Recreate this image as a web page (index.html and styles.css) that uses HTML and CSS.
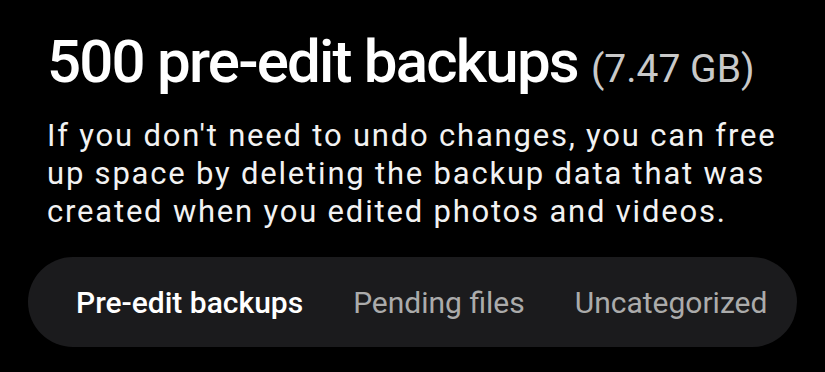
FILE: index.html
```html
<!DOCTYPE html>
<html>
<head>
    <title>Pre-edit backups</title>
    <meta charset="UTF-8">
    <meta name="viewport" content="width=device-width, initial-scale=1.0">
    <link rel="stylesheet" href="styles.css">
</head>
<body class="page">
    <header class="summary">
        <h1 class="summary-title">500 pre-edit backups <span class="summary-size">(7.47 GB)</span></h1>
        <p class="summary-text">If you don't need to undo changes, you can free up space by deleting the backup data that was created when you edited photos and videos.</p>
    </header>

    <nav class="tabs">
        <button class="tab tab-active">Pre-edit backups</button>
        <button class="tab">Pending files</button>
        <button class="tab">Uncategorized</button>
    </nav>
</body>
</html>
```

FILE: styles.css
```css
.page {
margin: 0;
background: #000;
font-family: Roboto, "Noto Sans", sans-serif;
color: #fff;
}

.summary {
padding: 24px 30px 0 47px;
}

.summary-title {
margin: 0;
font-size: 60px;
font-weight: 500;
line-height: 76px;
letter-spacing: -1.8px;
}

.summary-size {
font-size: 39px;
font-weight: 400;
color: #c9c9c9;
letter-spacing: 0;
}

.summary-text {
margin: 10px 0 0;
font-size: 31px;
line-height: 38px;
letter-spacing: 1.8px;
color: #f2f2f2;
}

.tabs {
margin: 26px 28px 0 28px;
height: 90px;
border-radius: 45px;
background: #1b1b1d;
display: flex;
align-items: center;
padding: 0 26px 0 48px;
gap: 50px;
}

.tab {
flex-shrink: 0;
white-space: nowrap;
background: transparent;
border: none;
padding: 0;
font-family: inherit;
font-size: 30px;
color: #ababab;
cursor: pointer;
}

.tab-active {
color: #fff;
font-weight: 500;
}
```
